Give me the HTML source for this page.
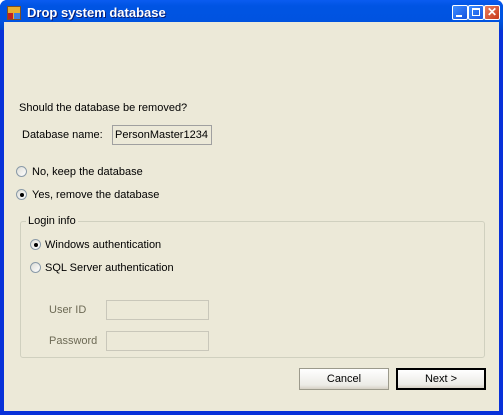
<!DOCTYPE html><html><head><style>
body{margin:0;width:503px;height:415px;overflow:hidden;background:#fff;font-family:"Liberation Sans",sans-serif;font-size:11px;color:#000}
.win{position:absolute;left:0;top:0;width:503px;height:415px;background:#0831d9;border-radius:7px 7px 0 0;overflow:hidden}
.tb{position:absolute;left:0;top:0;width:503px;height:30px;background:linear-gradient(#0a5cf0,#0054e3 20%,#0053e0 70%,#0046c8)}
.title{position:absolute;left:27px;top:5px;color:#fff;font-weight:bold;font-size:13px;text-shadow:1px 1px #0a1e72}
.client{position:absolute;left:4px;top:22px;width:495px;height:389px;background:#ece9d8}
.a{position:absolute;white-space:nowrap}
.tbx{position:absolute;border:1px solid #7f9db9;background:#ece9d8;box-sizing:border-box}
.r{position:absolute;width:11px;height:11px;border-radius:50%;border:1px solid #8a9aa8;background:linear-gradient(135deg,#dcdcd6,#fff);box-sizing:border-box}
.r.on::after{content:"";position:absolute;left:3px;top:3px;width:4px;height:4px;border-radius:50%;background:#000}
.btn{position:absolute;width:90px;height:22px;box-sizing:border-box;border:1px solid #9c9a8c;background:linear-gradient(#fff,#ecebe6 80%,#d6d0c5);text-align:center;line-height:20px}
.wb{position:absolute;top:5px;width:16px;height:15px;border:1px solid #fff;border-radius:2px;box-sizing:border-box;background:linear-gradient(135deg,#3c8cff,#1453e0)}
</style></head><body><div class="win">
<div class="tb"></div>
<div style="position:absolute;left:7px;top:6px;width:14px;height:14px;background:#e8b030;border:1px solid #805020;box-sizing:border-box"><div style="position:absolute;left:0;top:6px;width:5px;height:6px;background:#c02020"></div><div style="position:absolute;left:6px;top:6px;width:6px;height:6px;background:#4080e0"></div></div>
<div class="title">Drop system database</div>
<div class="wb" style="left:452px"><div style="position:absolute;left:3px;top:9px;width:6px;height:2px;background:#fff"></div></div>
<div class="wb" style="left:468px"><div style="position:absolute;left:3px;top:2px;width:8px;height:8px;border:1px solid #fff;border-top-width:2px;box-sizing:border-box"></div></div>
<div class="wb" style="left:484px;background:linear-gradient(135deg,#e88060,#c83818)"><div style="position:absolute;left:2px;top:-1px;color:#fff;font-weight:bold;font-size:12px">✕</div></div>
<div class="client">
<div class="a" style="left:15px;top:80px">Should the database be removed?</div>
<div class="a" style="left:18px;top:107px">Database name:</div>
<div class="tbx" style="left:108px;top:103px;width:100px;height:20px;border-color:#a0a0a0;background:#ece9d8"><span style="position:absolute;left:2px;top:3px">PersonMaster1234</span></div>
<div class="r" style="left:12px;top:144px"></div><div class="a" style="left:28px;top:144px">No, keep the database</div>
<div class="r on" style="left:12px;top:167px"></div><div class="a" style="left:28px;top:167px">Yes, remove the database</div>
<div style="position:absolute;left:16px;top:199px;width:465px;height:137px;border:1px solid #d0d0bf;border-radius:3px;box-sizing:border-box"></div>
<div class="a" style="left:22px;top:193px;background:#ece9d8;padding:0 2px">Login info</div>
<div class="r on" style="left:26px;top:217px"></div><div class="a" style="left:41px;top:217px">Windows authentication</div>
<div class="r" style="left:26px;top:240px"></div><div class="a" style="left:41px;top:240px">SQL Server authentication</div>
<div class="a" style="left:45px;top:282px;color:#6d6a55">User ID</div>
<div class="tbx" style="left:102px;top:278px;width:103px;height:20px;border-color:#c9c7ba"></div>
<div class="a" style="left:45px;top:313px;color:#6d6a55">Password</div>
<div class="tbx" style="left:102px;top:309px;width:103px;height:20px;border-color:#c9c7ba"></div>
<div class="btn" style="left:295px;top:346px">Cancel</div>
<div class="btn" style="left:392px;top:346px;border:2px solid #000;line-height:18px">Next &gt;</div>
</div></div></body></html>
